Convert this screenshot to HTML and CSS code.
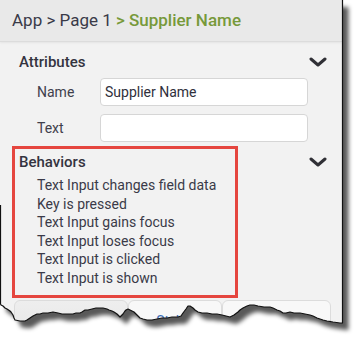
FILE: index.html
```html
<!DOCTYPE html>
<html lang="en">
<head>
  <meta charset="UTF-8">
  <title>Supplier Name</title>
  <link rel="stylesheet" href="styles.css">
</head>
<body>

<div class="page">
  <div class="panel">
    <!-- Breadcrumb -->
    <div class="crumbs">App &gt; Page 1 <span class="current">&gt; Supplier Name</span></div>

    <!-- Attributes -->
    <div class="section">
      <div class="section-head">
        <span>Attributes</span>
        <svg class="chevron" width="18" height="10" viewBox="0 0 18 10"><path d="M2 2 L9 8 L16 2" /></svg>
      </div>
      <div class="fields">
        <label>Name</label>
        <input type="text" value="Supplier Name">
        <label>Text</label>
        <input type="text">
      </div>
    </div>

    <!-- Behaviors -->
    <div class="section behaviors">
      <div class="section-head">
        <span>Behaviors</span>
        <svg class="chevron" width="18" height="10" viewBox="0 0 18 10"><path d="M2 2 L9 8 L16 2" /></svg>
      </div>
      <ul class="events">
        <li>Text Input changes field data</li>
        <li>Key is pressed</li>
        <li>Text Input gains focus</li>
        <li>Text Input loses focus</li>
        <li>Text Input is clicked</li>
        <li>Text Input is shown</li>
      </ul>
    </div>

    <div class="tabs">
      <div class="tab first">Properties</div>
      <div class="tab">Styles</div>
      <div class="tab">Actions</div>
    </div>

    <!-- annotation box -->
    <div class="highlight"></div>
  </div>

  <!-- torn paper edge -->
  <svg class="torn" width="358" height="347" viewBox="0 0 358 347">
    <defs>
      <filter id="soft"><feGaussianBlur stdDeviation="2" /></filter>
      <clipPath id="outside">
        <path clip-rule="evenodd" d="M0 0 H358 V347 H0 Z M0,0 H342.5 V323 L340,323 L333,322 L327,321 L323,320 L317,318 L313,316 L310,315 L305,314 L300,313 L294,313 L290,312 L286,313 L283,313 L280,311 L277,310 L273,308 L270,307 L264,307 L258,306 L254,305 L250,305 L247,306 L243,308 L240,310 L238,312 L234,315 L230,317 L226,316 L222,315 L217,314 L212,314 L207,313 L202,313 L198,312 L195,310 L193,308 L190,306 L188,306 L186,309 L183,313 L181,316 L178,317 L172,317 L167,318 L162,318 L157,319 L152,320 L147,320 L143,319 L140,318 L138,316 L137,315 L134,312 L132,311 L130,310 L128,309 L126,310 L125,311 L123,314 L121,316 L120,317 L118,315 L117,314 L114,312 L112,311 L109,310 L107,309 L103,308 L100,308 L96,308 L92,309 L88,310 L85,310 L82,312 L80,313 L76,313 L73,314 L68,314 L62,314 L58,313 L53,312 L48,313 L43,313 L40,314 L37,314 L33,316 L30,318 L27,320 L25,321 L20,321 L15,320 L14,318 L13,315 L11,312 L10,311 L7,309 L5,308 L3,306 L1,305 L0,304 Z" />
      </clipPath>
    </defs>
    <path class="paper-cut" fill-rule="evenodd" d="M0 0 H358 V347 H0 Z M0,0 H342.5 V323 L340,323 L333,322 L327,321 L323,320 L317,318 L313,316 L310,315 L305,314 L300,313 L294,313 L290,312 L286,313 L283,313 L280,311 L277,310 L273,308 L270,307 L264,307 L258,306 L254,305 L250,305 L247,306 L243,308 L240,310 L238,312 L234,315 L230,317 L226,316 L222,315 L217,314 L212,314 L207,313 L202,313 L198,312 L195,310 L193,308 L190,306 L188,306 L186,309 L183,313 L181,316 L178,317 L172,317 L167,318 L162,318 L157,319 L152,320 L147,320 L143,319 L140,318 L138,316 L137,315 L134,312 L132,311 L130,310 L128,309 L126,310 L125,311 L123,314 L121,316 L120,317 L118,315 L117,314 L114,312 L112,311 L109,310 L107,309 L103,308 L100,308 L96,308 L92,309 L88,310 L85,310 L82,312 L80,313 L76,313 L73,314 L68,314 L62,314 L58,313 L53,312 L48,313 L43,313 L40,314 L37,314 L33,316 L30,318 L27,320 L25,321 L20,321 L15,320 L14,318 L13,315 L11,312 L10,311 L7,309 L5,308 L3,306 L1,305 L0,304 Z" />
    <g clip-path="url(#outside)">
      <path class="paper-shadow" filter="url(#soft)" transform="translate(6 7)" d="M0,0 H342.5 V323 L340,323 L333,322 L327,321 L323,320 L317,318 L313,316 L310,315 L305,314 L300,313 L294,313 L290,312 L286,313 L283,313 L280,311 L277,310 L273,308 L270,307 L264,307 L258,306 L254,305 L250,305 L247,306 L243,308 L240,310 L238,312 L234,315 L230,317 L226,316 L222,315 L217,314 L212,314 L207,313 L202,313 L198,312 L195,310 L193,308 L190,306 L188,306 L186,309 L183,313 L181,316 L178,317 L172,317 L167,318 L162,318 L157,319 L152,320 L147,320 L143,319 L140,318 L138,316 L137,315 L134,312 L132,311 L130,310 L128,309 L126,310 L125,311 L123,314 L121,316 L120,317 L118,315 L117,314 L114,312 L112,311 L109,310 L107,309 L103,308 L100,308 L96,308 L92,309 L88,310 L85,310 L82,312 L80,313 L76,313 L73,314 L68,314 L62,314 L58,313 L53,312 L48,313 L43,313 L40,314 L37,314 L33,316 L30,318 L27,320 L25,321 L20,321 L15,320 L14,318 L13,315 L11,312 L10,311 L7,309 L5,308 L3,306 L1,305 L0,304 Z" />
    </g>
    <path class="paper-edge" d="M342.5,0 V323 L340,323 L333,322 L327,321 L323,320 L317,318 L313,316 L310,315 L305,314 L300,313 L294,313 L290,312 L286,313 L283,313 L280,311 L277,310 L273,308 L270,307 L264,307 L258,306 L254,305 L250,305 L247,306 L243,308 L240,310 L238,312 L234,315 L230,317 L226,316 L222,315 L217,314 L212,314 L207,313 L202,313 L198,312 L195,310 L193,308 L190,306 L188,306 L186,309 L183,313 L181,316 L178,317 L172,317 L167,318 L162,318 L157,319 L152,320 L147,320 L143,319 L140,318 L138,316 L137,315 L134,312 L132,311 L130,310 L128,309 L126,310 L125,311 L123,314 L121,316 L120,317 L118,315 L117,314 L114,312 L112,311 L109,310 L107,309 L103,308 L100,308 L96,308 L92,309 L88,310 L85,310 L82,312 L80,313 L76,313 L73,314 L68,314 L62,314 L58,313 L53,312 L48,313 L43,313 L40,314 L37,314 L33,316 L30,318 L27,320 L25,321 L20,321 L15,320 L14,318 L13,315 L11,312 L10,311 L7,309 L5,308 L3,306 L1,305 L0.5,304 V205" />
  </svg>
</div>

</body>
</html>
```

FILE: styles.css
```css
body {
  margin: 0;
  font-family: Roboto, 'Liberation Sans', sans-serif;
  background-color: #fff;
}

.page {
  position: relative;
  width: 358px;
  height: 347px;
  overflow: hidden;
}

.panel {
  position: relative;
  width: 342px;
  height: 347px;
  background: #f2f2f2;
}

.crumbs {
  height: 41px;
  line-height: 41px;
  padding-left: 12px;
  font-size: 17px;
  color: #3a3a48;
  background: #e9e9e9;
  border-bottom: 1px solid #dcdcdc;
  box-shadow: 0 1px 2px rgba(0, 0, 0, 0.06);
}

.current {
  color: #77993a;
  font-weight: 500;
}

.section {
  margin-top: 8px;
}

.section-head {
  display: flex;
  justify-content: space-between;
  align-items: center;
  height: 24px;
  padding: 0 15px 0 19px;
  font-size: 15px;
  font-weight: 500;
  color: #34343f;
}

.chevron path {
  fill: none;
  stroke: #303036;
  stroke-width: 3;
  stroke-linecap: round;
  stroke-linejoin: round;
}

.fields {
  display: grid;
  grid-template-columns: 63px 208px;
  row-gap: 8px;
  align-items: center;
  margin-top: 4px;
  padding-left: 37px;
}

.fields label {
  font-size: 14px;
  color: #40404c;
}

.fields input {
  box-sizing: border-box;
  height: 28px;
  padding: 0 4px;
  border: 1px solid #d6d6d6;
  border-radius: 4px;
  background: #fff;
  font-family: Roboto, sans-serif;
  font-size: 14px;
  color: #30303c;
  outline: none;
}

.events {
  list-style: none;
  margin: 2px 0 0;
  padding-left: 37px;
  font-size: 14px;
  line-height: 18.6px;
  color: #3a3a48;
}

.tabs {
  display: flex;
  width: 317px;
  margin: 12px 0 0 14px;
}

.tab {
  height: 44px;
  line-height: 40px;
  border: 1px solid #dcdcdc;
  border-radius: 6px 6px 0 0;
  background: #f8f8f8;
  text-align: center;
  font-size: 14px;
  color: #3d6fb6;
  width: 94px;
}

.tab.first {
  width: 114px;
  background: linear-gradient(#eeeeee, #e6e6e6);
}

.tab:last-child {
  width: 109px;
}

/* red annotation box */
.highlight {
  position: absolute;
  left: 12px;
  top: 146px;
  width: 220px;
  height: 146px;
  border: 3px solid #e5463f;
}

.torn {
  position: absolute;
  left: 0;
  top: 0;
}

.paper-cut {
  fill: #fff;
}

.paper-shadow {
  fill: rgba(0, 0, 0, 0.65);
}

.paper-edge {
  fill: none;
  stroke: #111;
  stroke-width: 1.2;
  stroke-linejoin: round;
}
```
